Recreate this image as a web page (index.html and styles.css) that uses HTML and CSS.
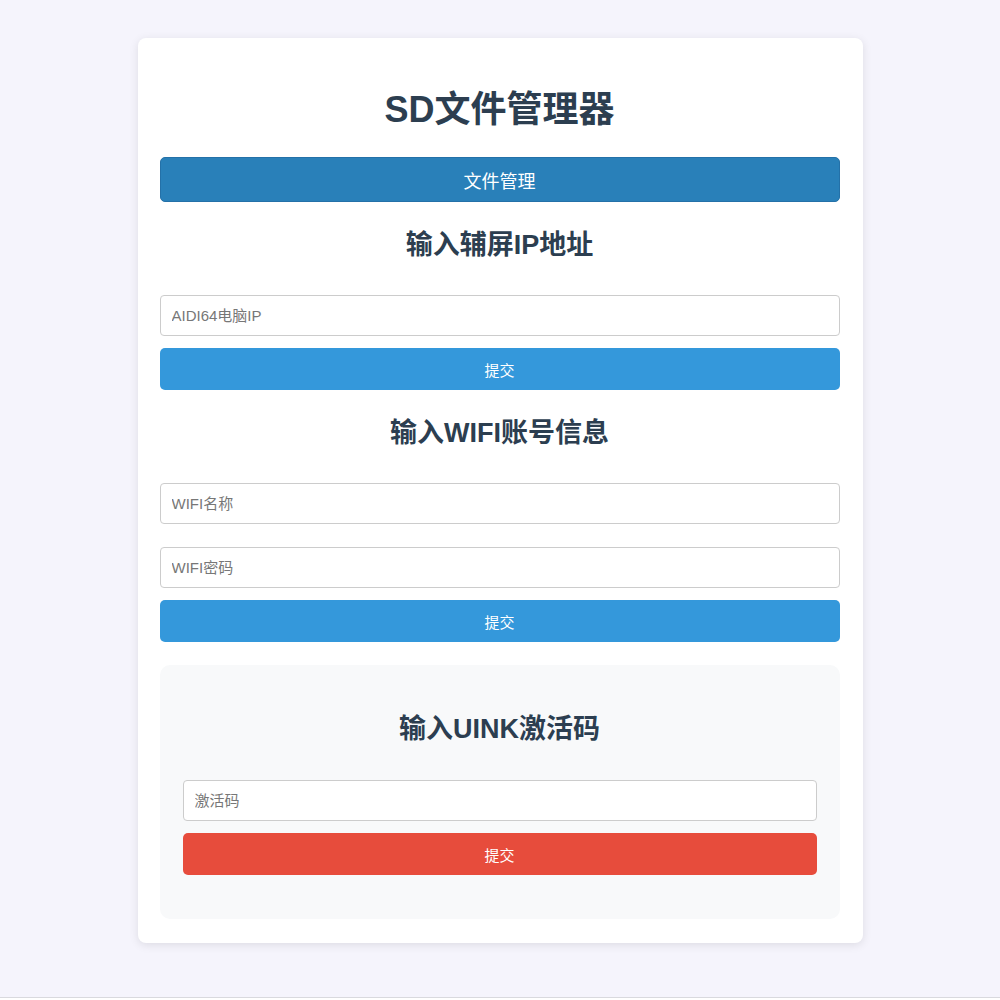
FILE: index.html
```html
<!DOCTYPE html>
<html lang="zh-CN">
<head>
<meta charset="utf-8">
<title>SD文件管理器</title>
<link rel="stylesheet" href="styles.css">
</head>
<body>
<div class="card">
  <h1 class="title">SD文件管理器</h1>
  <button class="btn btn-manage">文件管理</button>

  <h2 class="heading">输入辅屏IP地址</h2>
  <input class="field" type="text" placeholder="AIDI64电脑IP">
  <button class="btn btn-submit">提交</button>

  <h2 class="heading">输入WIFI账号信息</h2>
  <input class="field" type="text" placeholder="WIFI名称">
  <input class="field field-next" type="password" placeholder="WIFI密码">
  <button class="btn btn-submit">提交</button>

  <div class="section">
    <h2 class="heading heading-section">输入UINK激活码</h2>
    <input class="field" type="text" placeholder="激活码">
    <button class="btn btn-submit btn-red">提交</button>
  </div>
</div>
</body>
</html>
```

FILE: styles.css
```css
html {
  background: #ffffff;
}
body {
  margin: 0;
  padding-top: 38px;
  box-sizing: border-box;
  min-height: 998px;
  background: #f5f4fc;
  border-bottom: 1px solid #d9d9de;
  font-family: "Liberation Sans", "Noto Sans CJK SC", sans-serif;
}
.card {
  box-sizing: border-box;
  width: 725px;
  margin: 0 auto;
  background: #ffffff;
  border-radius: 8px;
  box-shadow: 0 2px 10px rgba(0, 0, 0, 0.1);
  padding: 22px 23px 24px 22px;
  display: flex;
  flex-direction: column;
}
.title {
  margin: 28px 0 26px;
  font-size: 36px;
  line-height: 43px;
  font-weight: bold;
  color: #2c3e50;
  text-align: center;
}
.heading {
  margin: 27px 0 34px;
  font-size: 27px;
  line-height: 32px;
  font-weight: bold;
  color: #2c3e50;
  text-align: center;
}
.heading-section {
  margin-top: 26px;
  margin-bottom: 35px;
}
.btn {
  display: block;
  width: 100%;
  border: none;
  border-radius: 5px;
  color: #ffffff;
  font-family: "Liberation Sans", "Noto Sans CJK SC", sans-serif;
  cursor: pointer;
  padding: 0;
}
.btn-manage {
  height: 45px;
  background: #2980b9;
  border: 1px solid #2471a8;
  font-size: 18px;
}
.btn-submit {
  height: 42px;
  margin-top: 12px;
  background: #3498db;
  font-size: 15px;
}
.btn-red {
  background: #e74c3c;
}
.field {
  box-sizing: border-box;
  display: block;
  width: 100%;
  height: 41px;
  margin: 0;
  padding: 0 11px;
  border: 1px solid #cccccc;
  border-radius: 4px;
  background: #ffffff;
  font-size: 15px;
  font-family: "Liberation Sans", "Noto Sans CJK SC", sans-serif;
  color: #333333;
}
.field::placeholder {
  color: #777777;
}
.field-next {
  margin-top: 23px;
}
.section {
  margin-top: 23px;
  background: #f8f9fa;
  border-radius: 10px;
  padding: 22px 23px 44px;
}
```
